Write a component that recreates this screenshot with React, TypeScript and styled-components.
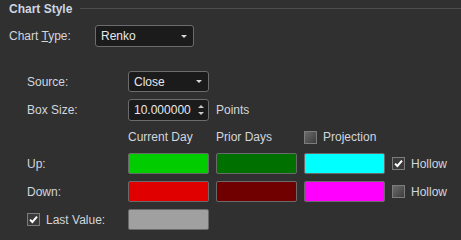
import styled, { createGlobalStyle } from 'styled-components';

const GlobalStyle = createGlobalStyle`
  html, body {
    margin: 0;
    padding: 0;
    background: #303030;
  }
  body {
    font-family: 'Liberation Sans', Arial, sans-serif;
    font-size: 12px;
    color: #d2d6de;
  }
`;

const Panel = styled.div`
  width: 461px;
  height: 240px;
  box-sizing: border-box;
  padding: 0 9px;
  background: #303030;
  overflow: hidden;
`;

const Header = styled.div`
  display: flex;
  align-items: center;
  gap: 8px;
  height: 17px;
`;

const Title = styled.div`
  font-weight: bold;
  color: #cdd6e3;
`;

const Rule = styled.div`
  flex: 1;
  height: 1px;
  background: #4c4c4c;
  margin-right: -9px;
`;

const TypeRow = styled.div`
  display: flex;
  align-items: center;
  margin-top: 8px;
`;

const Label = styled.div<{ $width?: number }>`
  width: ${(p) => (p.$width ? `${p.$width}px` : 'auto')};
  white-space: nowrap;
`;

const Grid = styled.div`
  display: grid;
  grid-template-columns: 94px 81px 81px 81px auto;
  grid-template-rows: 21px 22px 18px 21px 21px 21px;
  column-gap: 7px;
  row-gap: 7px;
  align-items: center;
  margin-top: 24px;
  padding-left: 18px;
`;

const Field = styled.div<{ $width?: number; $height?: number }>`
  display: flex;
  align-items: center;
  justify-content: space-between;
  box-sizing: border-box;
  width: ${(p) => (p.$width ? `${p.$width}px` : '100%')};
  height: ${(p) => p.$height ?? 21}px;
  padding: 0 5px;
  background: #1b1b1b;
  border: 1px solid #6c6c6c;
  border-radius: 3px;
  color: #e6e8ec;
`;

const Arrow = styled.span`
  width: 0;
  height: 0;
  border-left: 3px solid transparent;
  border-right: 3px solid transparent;
  border-top: 3px solid #d8d8d8;
  margin-right: 1px;
`;

const Spin = styled.span`
  display: flex;
  flex-direction: column;
  gap: 4px;
  margin-right: -1px;
`;

const SpinTri = styled.span<{ $up?: boolean }>`
  width: 0;
  height: 0;
  border-left: 3px solid transparent;
  border-right: 3px solid transparent;
  ${(p) => (p.$up ? 'border-bottom: 3px solid #c8c8c8;' : 'border-top: 3px solid #c8c8c8;')}
`;

const Swatch = styled.div<{ $color: string }>`
  box-sizing: border-box;
  height: 21px;
  background: ${(p) => p.$color};
  border: 1px solid #6a6a6a;
  border-radius: 2px;
`;

const Check = styled.label`
  display: flex;
  align-items: center;
  gap: 6px;
  white-space: nowrap;
`;

const Box = styled.span<{ $checked?: boolean }>`
  position: relative;
  box-sizing: border-box;
  width: 13px;
  height: 13px;
  border: 1px solid #7c7c7c;
  background: ${(p) => (p.$checked ? '#3a3a3a' : 'linear-gradient(135deg, #6a6a6a, #3e3e3e)')};
  flex: none;
`;

const Tick = styled.svg`
  position: absolute;
  left: 1px;
  top: 1px;
`;

const CheckBox = ({ checked, children }: { checked?: boolean; children: string }) => (
  <Check>
    <Box $checked={checked}>
      {checked && (
        <Tick width="9" height="9" viewBox="0 0 9 9">
          <path d="M1 4.6 L3.4 7 L8 1.6" fill="none" stroke="#ffffff" strokeWidth="2" />
        </Tick>
      )}
    </Box>
    {children}
  </Check>
);

export default function App() {
  return (
    <>
      <GlobalStyle />
      <Panel>
        <Header>
          <Title>Chart Style</Title>
          <Rule />
        </Header>
        <TypeRow>
          <Label $width={86}>
            Chart <u>T</u>ype:
          </Label>
          <Field $width={99} $height={22}>
            Renko
            <Arrow />
          </Field>
        </TypeRow>
        <Grid>
          <Label>Source:</Label>
          <Field>
            Close
            <Arrow />
          </Field>
          <span />
          <span />
          <span />

          <Label>Box Size:</Label>
          <Field $height={22}>
            10.000000
            <Spin>
              <SpinTri $up />
              <SpinTri />
            </Spin>
          </Field>
          <Label>Points</Label>
          <span />
          <span />

          <span />
          <Label>Current Day</Label>
          <Label>Prior Days</Label>
          <CheckBox>Projection</CheckBox>
          <span />

          <Label>Up:</Label>
          <Swatch $color="#00cc00" />
          <Swatch $color="#007000" />
          <Swatch $color="#00ffff" />
          <CheckBox checked>Hollow</CheckBox>

          <Label>Down:</Label>
          <Swatch $color="#e00000" />
          <Swatch $color="#700000" />
          <Swatch $color="#ff00ff" />
          <CheckBox>Hollow</CheckBox>

          <CheckBox checked>Last Value:</CheckBox>
          <Swatch $color="#a0a0a0" />
          <span />
          <span />
          <span />
        </Grid>
      </Panel>
    </>
  );
}
